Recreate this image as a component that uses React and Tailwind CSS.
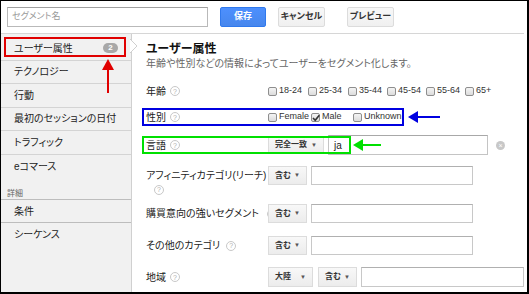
import React from 'react';

const jp = { fontFamily: '"Liberation Sans", "Noto Sans CJK JP", sans-serif' };

const Help = ({ className = '' }) => (
  <span className={`inline-flex shrink-0 items-center justify-center w-[10px] h-[10px] rounded-full border border-[#c8c8c8] text-[7px] leading-none text-[#b0b0b0] ${className}`}>?</span>
);

const Check = ({ checked }) => (
  <span className="relative shrink-0 inline-block w-[9px] h-[9px] border border-[#8e8e8e] rounded-[2px] bg-gradient-to-b from-[#f4f4f4] to-[#dcdcdc]">
    {checked && (
      <svg viewBox="0 0 10 10" className="absolute -left-[1px] -top-[1px] w-[10px] h-[10px]">
        <path d="M2 5 L4.2 7.3 L8.3 2.2" fill="none" stroke="#333" strokeWidth="1.6" />
      </svg>
    )}
  </span>
);

const CheckItem = ({ label, checked, w }) => (
  <div className="flex flex-none items-center gap-[2px] text-[9px] text-[#333] whitespace-nowrap" style={{ width: w }}>
    <Check checked={checked} />
    <span>{label}</span>
  </div>
);

const Dropdown = ({ label, w }) => (
  <div
    className="h-full flex flex-none items-center justify-between pl-[6px] pr-[6px] border border-[#dcdcdc] bg-gradient-to-b from-[#f8f8f8] to-[#ececec] text-[8px] font-bold text-[#333] whitespace-nowrap"
    style={{ width: w }}
  >
    <span>{label}</span>
    <span className="text-[6px] text-[#555]">▼</span>
  </div>
);

const SideItem = ({ children, line = true }) => (
  <div className={`h-[23.5px] flex items-center pl-[13px] text-[10px] text-[#222] whitespace-nowrap ${line ? 'border-b border-[#d4d4d4]' : ''}`}>
    {children}
  </div>
);

const FieldRow = ({ label, children, top, h, overlay }) => (
  <div className="relative flex items-center" style={{ marginTop: top, height: h }}>
    <div className="w-[122px] flex-none flex items-center gap-[4px] text-[10px] text-[#222] whitespace-nowrap">{label}</div>
    {children}
    {overlay}
  </div>
);

export default function App() {
  return (
    <div style={jp} className="w-[529px] h-[294px] bg-white border-l border-t border-r-2 border-b-2 border-black flex flex-col overflow-hidden relative [font-feature-settings:'palt']">
      {/* top bar */}
      <div className="h-[33px] shrink-0 flex items-center pl-[6px] border-b border-[#d6d6d6] mr-[3px]">
        <div className="w-[201px] h-[20px] border border-[#b9b9b9] border-t-[#a0a0a0] flex items-center pl-[4px] text-[9px] text-[#9a9a9a]">
          セグメント名
        </div>
        <button className="ml-[12px] w-[46px] h-[20px] rounded-[2px] border border-[#3079ed] bg-gradient-to-b from-[#4d90fe] to-[#4787ed] text-white text-[9px] font-bold">
          保存
        </button>
        <button className="ml-[12px] w-[47px] h-[20px] rounded-[2px] border border-[#dcdcdc] bg-gradient-to-b from-[#f8f8f8] to-[#f0f0f0] text-[#333] text-[9px] font-bold">
          キャンセル
        </button>
        <button className="ml-[22px] w-[47px] h-[20px] rounded-[2px] border border-[#dcdcdc] bg-gradient-to-b from-[#f8f8f8] to-[#f0f0f0] text-[#333] text-[9px] font-bold">
          プレビュー
        </button>
      </div>

      <div className="flex flex-1 min-h-0">
        {/* sidebar */}
        <div className="w-[131px] shrink-0 bg-[#f1f1f1] border-r border-[#d0d0d0] pt-[3px] relative">
          <div className="h-[23.5px] flex items-center justify-between pl-[13px] pr-[13px] border-b border-[#d4d4d4] text-[10px] text-[#222]">
            <span>ユーザー属性</span>
            <span className="w-[15px] h-[10px] rounded-full bg-[#a8a8a8] text-white text-[8px] font-bold flex items-center justify-center">2</span>
          </div>
          <SideItem>テクノロジー</SideItem>
          <SideItem>行動</SideItem>
          <SideItem>最初のセッションの日付</SideItem>
          <SideItem>トラフィック</SideItem>
          <SideItem line={false}>eコマース</SideItem>
          <div className="mt-[11px] pl-[6px] text-[8px] text-[#666] h-[11px] leading-[10px] border-b border-[#bdbdbd]">詳細</div>
          <div className="h-[23px] flex items-center pl-[13px] text-[10px] text-[#222] border-b border-[#bdbdbd]">条件</div>
          <SideItem line={false}>シーケンス</SideItem>

          {/* chevron on edge */}
          <svg viewBox="0 0 8 14" className="absolute -right-[7px] top-[5px] w-[8px] h-[14px]">
            <path d="M0 0 L7 7 L0 14" fill="#fff" stroke="#d0d0d0" strokeWidth="1" />
          </svg>
          {/* red annotation */}
          <div className="absolute left-[3px] top-[3px] w-[122px] h-[20px] border-2 border-[#e00000]" />
          <svg viewBox="0 0 12 34" className="absolute left-[101px] top-[25px] w-[12px] h-[34px]">
            <path d="M6 34 L6 10" stroke="#e00000" strokeWidth="2" />
            <path d="M0 11 L6 0 L12 11 Z" fill="#e00000" />
          </svg>
        </div>

        {/* main */}
        <div className="flex-1 pl-[14px]">
          <div className="mt-[8px] h-[14px] flex items-center text-[12px] font-bold text-[#111]">ユーザー属性</div>
          <div className="h-[14px] flex items-center text-[10px] text-[#666] whitespace-nowrap">年齢や性別などの情報によってユーザーをセグメント化します。</div>

          <FieldRow label={<><span>年齢</span><Help /></>} top={12} h={18}>
            <CheckItem label="18-24" w={40} />
            <CheckItem label="25-34" w={40} />
            <CheckItem label="35-44" w={39} />
            <CheckItem label="45-54" w={39} />
            <CheckItem label="55-64" w={39} />
            <CheckItem label="65+" w={30} />
          </FieldRow>

          <FieldRow
            label={<><span>性別</span><Help /></>}
            top={8}
            h={18}
            overlay={
              <>
                <div className="absolute -left-[4px] top-0 w-[262px] h-[18px] border-2 border-[#0000e0]" />
                <svg viewBox="0 0 32 12" className="absolute left-[262px] top-[3px] w-[32px] h-[12px]">
                  <path d="M8 6 L32 6" stroke="#0000e0" strokeWidth="2" />
                  <path d="M0 6 L10 0 L10 12 Z" fill="#0000e0" />
                </svg>
              </>
            }
          >
            <CheckItem label="Female" w={43} />
            <CheckItem label="Male" checked w={42} />
            <CheckItem label="Unknown" w={50} />
          </FieldRow>

          <FieldRow
            label={<><span>言語</span><Help /></>}
            top={9}
            h={20}
            overlay={
              <>
                <div className="absolute -left-[4px] top-[1px] w-[209px] h-[18px] border-2 border-[#00e000]" />
                <svg viewBox="0 0 28 12" className="absolute left-[207px] top-[4px] w-[28px] h-[12px]">
                  <path d="M8 6 L28 6" stroke="#00e000" strokeWidth="2" />
                  <path d="M0 6 L10 0 L10 12 Z" fill="#00e000" />
                </svg>
              </>
            }
          >
            <div className="h-[17px]"><Dropdown label="完全一致" w={56} /></div>
            <div className="ml-[4px] w-[160px] h-[20px] border border-[#c4c4c4] border-t-[#a8a8a8] flex items-center pl-[5px] text-[10px] text-[#222]">ja</div>
            <span className="ml-[8px] inline-flex items-center justify-center w-[9px] h-[9px] rounded-full bg-[#c8c8c8] text-white text-[7px] leading-none">×</span>
          </FieldRow>

          <div className="flex items-start mt-[11px] h-[28px]">
            <div className="w-[122px] flex-none text-[10px] text-[#222] leading-[13px] pt-[3px] whitespace-nowrap">
              <div>アフィニティカテゴリ(リーチ)</div>
              <Help className="mt-[2px] ml-[8px]" />
            </div>
            <div className="h-[19px]"><Dropdown label="含む" w={39} /></div>
            <div className="ml-[4px] w-[162px] h-[19px] border border-[#c8c8c8] border-t-[#b0b0b0]" />
          </div>

          <FieldRow label={<><span>購買意向の強いセグメント</span><Help className="ml-[4px]" /></>} top={10} h={19}>
            <div className="h-[19px]"><Dropdown label="含む" w={39} /></div>
            <div className="ml-[4px] w-[162px] h-[19px] border border-[#c8c8c8] border-t-[#b0b0b0]" />
          </FieldRow>

          <FieldRow label={<><span>その他のカテゴリ</span><Help className="ml-[2px]" /></>} top={13} h={19}>
            <div className="h-[19px]"><Dropdown label="含む" w={39} /></div>
            <div className="ml-[4px] w-[162px] h-[19px] border border-[#c8c8c8] border-t-[#b0b0b0]" />
          </FieldRow>

          <FieldRow label={<><span>地域</span><Help /></>} top={12} h={20}>
            <div className="h-[20px]"><Dropdown label="大陸" w={45} /></div>
            <div className="ml-[5px] h-[20px]"><Dropdown label="含む" w={39} /></div>
            <div className="ml-[4px] w-[163px] h-[20px] border border-[#c8c8c8] border-t-[#b0b0b0]" />
          </FieldRow>
        </div>
      </div>
    </div>
  );
}
